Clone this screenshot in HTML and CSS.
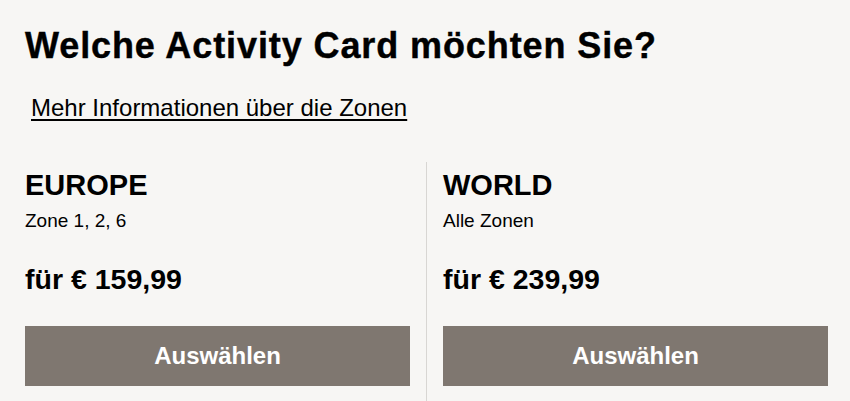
FILE: index.html
```html
<!DOCTYPE html>
<html lang="de">
<head>
    <meta charset="UTF-8">
    <meta name="viewport" content="width=device-width, initial-scale=1.0">
    <title>Activity Card</title>
    <link rel="stylesheet" href="styles.css">
</head>
<body>
    <div class="page">
        <h1 class="title">Welche Activity Card möchten Sie?</h1>
        <a class="zones-link" href="#">Mehr Informationen über die Zonen</a>

        <div class="cards">
            <div class="card">
                <h2 class="card-name">EUROPE</h2>
                <p class="card-zones">Zone 1, 2, 6</p>
                <p class="card-price">für € 159,99</p>
                <button class="select-button">Auswählen</button>
            </div>
            <div class="card">
                <h2 class="card-name">WORLD</h2>
                <p class="card-zones">Alle Zonen</p>
                <p class="card-price">für € 239,99</p>
                <button class="select-button">Auswählen</button>
            </div>
        </div>
    </div>
</body>
</html>
```

FILE: styles.css
```css
:root {
    --bg-color: #f7f6f4;
    --text-color: #000;
    --button-color: #7f7770;
    --divider-color: #d8d6d3;
}

body {
    margin: 0;
    font-family: 'Liberation Sans', Arial, sans-serif;
    background-color: var(--bg-color);
    color: var(--text-color);
}

.page {
    padding: 24px 22px 0 25px;
}

.title {
    margin: 0;
    font-size: 36px;
    line-height: 44px;
    font-weight: bold;
    letter-spacing: 0.9px;
    -webkit-text-stroke: 0.4px var(--text-color);
}

.zones-link {
    display: inline-block;
    margin: 26px 0 0 6px;
    font-size: 24px;
    line-height: 28px;
    color: var(--text-color);
    text-decoration: underline;
    text-underline-offset: 3px;
    text-decoration-thickness: 2px;
}

.cards {
    display: flex;
    margin-top: 40px;
}

.card {
    flex: 1;
    padding-top: 6px;
    padding-bottom: 15px;
}

.card:first-child {
    padding-right: 16px;
}

.card + .card {
    border-left: 1px solid var(--divider-color);
    padding-left: 16px;
}

.card-name {
    margin: 0;
    font-size: 29px;
    line-height: 34px;
    font-weight: bold;
}

.card-zones {
    margin: 8px 0 0;
    font-size: 19px;
    line-height: 22px;
}

.card-price {
    margin: 30px 0 0;
    font-size: 28.5px;
    line-height: 34px;
    font-weight: bold;
}

.select-button {
    display: block;
    width: 100%;
    height: 60px;
    margin-top: 30px;
    border: none;
    background: var(--button-color);
    color: white;
    font-family: inherit;
    font-size: 24px;
    font-weight: bold;
    cursor: pointer;
}
```
